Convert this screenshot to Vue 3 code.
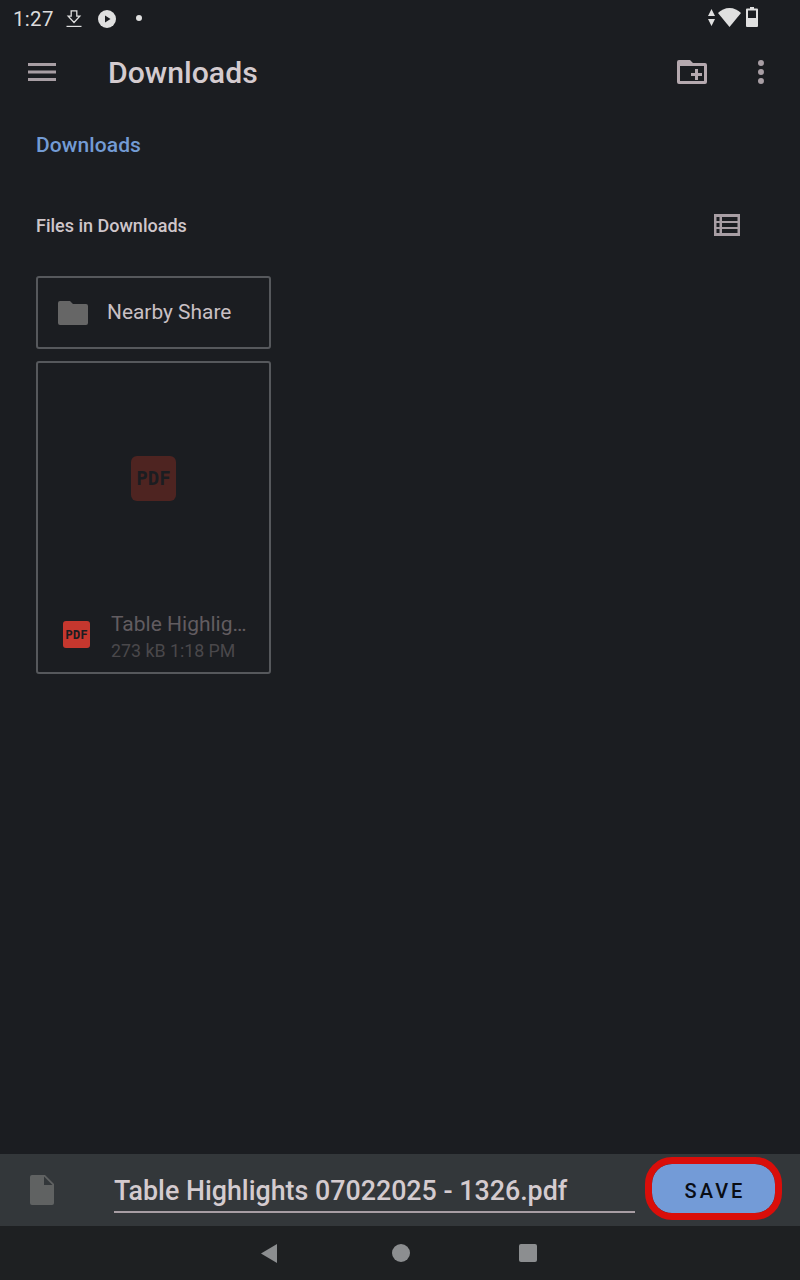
<script setup>
const statusTime = "1:27";
const fileName = "Table Highlights 07022025 - 1326.pdf";
</script>

<template>
  <div class="screen">
    <div class="status-bar">
      <div class="status-left">
        <span class="time">{{ statusTime }}</span>
        <svg class="dl-icon" width="16" height="18" viewBox="0 0 16 18">
          <path d="M5.200 .8h5.600v5.400h3L8 12.500 2.200 6.200h3z" fill="none" stroke="#e0e0e0" stroke-width="1.300" />
          <rect x="0.500" y="15.800" width="15" height="1.200" fill="#e0e0e0" />
        </svg>
        <svg class="play-icon" width="18" height="18" viewBox="0 0 18 18">
          <circle cx="9" cy="9" r="9" fill="#e0e0e0" />
          <path d="M7 5.500v7L12.500 9z" fill="#1b1d21" />
        </svg>
        <span class="dot"></span>
      </div>
      <div class="status-right">
        <svg width="7" height="17" viewBox="0 0 7 17">
          <path d="M3.500 0L7 7H0zM0 10h7l-3.500 7z" fill="#e0e0e0" />
        </svg>
        <svg width="23" height="19" viewBox="0 0 23 19">
          <path d="M11.500 19L0 5C3 2 7 0 11.500 0S20 2 23 5z" fill="#e0e0e0" />
        </svg>
        <svg class="battery" width="12" height="20" viewBox="0 0 12 20">
          <path fill-rule="evenodd" d="M4 0h4v1.500h3a1 1 0 0 1 1 1V19a1 1 0 0 1-1 1H1a1 1 0 0 1-1-1V2.500a1 1 0 0 1 1-1h3zM2 3.500V11h8V3.500z" fill="#e0e0e0" />
        </svg>
      </div>
    </div>

    <header class="app-bar">
      <svg class="menu-icon" width="28" height="18" viewBox="0 0 28 18">
        <path d="M0 0h28v3H0zM0 7.500h28v3H0zM0 15h28v3H0z" fill="#a89ea4" />
      </svg>
      <h1 class="title">Downloads</h1>
      <svg class="new-folder" width="30" height="24" viewBox="0 0 30 24">
        <path fill-rule="evenodd" d="M2 0h11l3 3h12a2 2 0 0 1 2 2v17a2 2 0 0 1-2 2H2a2 2 0 0 1-2-2V2a2 2 0 0 1 2-2zM3 6v15h24V6z" fill="#b5a9af" />
        <path d="M18 9h3v4h4v3h-4v4h-3v-4h-4v-3h4z" fill="#b5a9af" />
      </svg>
      <div class="more">
        <span></span><span></span><span></span>
      </div>
    </header>

    <div class="crumb">Downloads</div>

    <div class="section-head">
      <span class="section-title">Files in Downloads</span>
      <svg width="26" height="22" viewBox="0 0 26 22">
        <path fill-rule="evenodd" d="M0 0h26v22H0zM2.500 3v4h3V3zM8 3v4h15.500V3zM2.500 9v4h3V9zM8 9v4h15.500V9zM2.500 15v4h3v-4zM8 15v4h15.500v-4z" fill="#a89ea4" />
      </svg>
    </div>

    <div class="cards">
      <div class="card folder-card">
        <svg width="30" height="24" viewBox="0 0 30 24">
          <path d="M2 0h10l3 3h13a2 2 0 0 1 2 2v17a2 2 0 0 1-2 2H2a2 2 0 0 1-2-2V2a2 2 0 0 1 2-2z" fill="#666666" />
        </svg>
        <span class="folder-name">Nearby Share</span>
      </div>
      <div class="card file-card">
        <div class="thumb">
          <div class="pdf pdf-big">PDF</div>
        </div>
        <div class="file-info">
          <div class="pdf pdf-small">PDF</div>
          <div class="file-text">
            <div class="file-name">Table Highlig…</div>
            <div class="file-meta">273 kB 1:18 PM</div>
          </div>
        </div>
      </div>
    </div>

    <div class="spacer"></div>

    <div class="save-bar">
      <svg class="doc-icon" width="24" height="30" viewBox="0 0 24 30">
        <path d="M2 0h13l9 9v19a2 2 0 0 1-2 2H2a2 2 0 0 1-2-2V2a2 2 0 0 1 2-2z" fill="#606262" />
        <path d="M14 1.500L22.500 10H14z" fill="#33373a" />
      </svg>
      <div class="name-field">{{ fileName }}</div>
      <div class="save-btn">SAVE</div>
    </div>

    <nav class="nav-bar">
      <svg width="16" height="19" viewBox="0 0 16 19">
        <path d="M16 0v19L0 9.500z" fill="#8c8e90" />
      </svg>
      <span class="nav-circle"></span>
      <span class="nav-square"></span>
    </nav>
  </div>
</template>

<style scoped>
.screen {
  width: 800px;
  height: 1280px;
  background: #1b1d21;
  display: flex;
  flex-direction: column;
  font-family: Roboto, "Liberation Sans", sans-serif;
  overflow: hidden;
}
.status-bar {
  height: 36px;
  display: flex;
  justify-content: space-between;
  align-items: center;
  padding: 0 42px 0 13px;
}
.status-left {
  display: flex;
  align-items: center;
}
.time {
  font-size: 20.500px;
  color: #dcdcdc;
  letter-spacing: 0.3px;
  margin-top: 2px;
}
.dl-icon {
  margin-left: 12px;
  margin-top: 2px;
}
.play-icon {
  margin-left: 16px;
  margin-top: 1px;
}
.dot {
  width: 6px;
  height: 6px;
  border-radius: 50%;
  background: #e0e0e0;
  margin-left: 20px;
}
.status-right {
  display: flex;
  align-items: center;
  gap: 3px;
  margin-top: -2px;
}
.battery {
  margin-left: 2px;
}
.app-bar {
  height: 72px;
  display: flex;
  align-items: center;
  padding-left: 28px;
}
.title {
  margin: 0 0 0 52px;
  font-size: 30.200px;
  font-weight: 500;
  color: #d4cbcf;
  flex: 1;
}
.more {
  width: 6px;
  margin: 0 36px 0 51px;
  display: flex;
  flex-direction: column;
  gap: 3px;
}
.more span {
  width: 6px;
  height: 6px;
  border-radius: 50%;
  background: #a89ea4;
}
.crumb {
  margin-top: 24px;
  padding-left: 36px;
  font-size: 21px;
  font-weight: 500;
  letter-spacing: 0.1px;
  color: #739bd4;
  line-height: 26px;
}
.section-head {
  margin-top: 55px;
  padding: 0 60px 0 36px;
  height: 24px;
  display: flex;
  justify-content: space-between;
  align-items: center;
}
.section-title {
  font-size: 18px;
  font-weight: 500;
  color: #cfc6ca;
}
.cards {
  margin: 39px 0 0 36px;
  width: 235px;
  display: flex;
  flex-direction: column;
  gap: 12px;
}
.card {
  box-sizing: border-box;
  border: 2px solid #56585c;
  border-radius: 3px;
}
.folder-card {
  height: 73px;
  display: flex;
  align-items: center;
  padding-left: 20px;
}
.folder-name {
  margin: -1px 0 0 19px;
  font-size: 20.900px;
  color: #c9c0c4;
}
.file-card {
  height: 313px;
  display: flex;
  flex-direction: column;
}
.thumb {
  height: 230px;
  display: flex;
  align-items: center;
  justify-content: center;
}
.pdf {
  display: flex;
  align-items: center;
  justify-content: center;
  font-family: "DejaVu Sans Mono", monospace;
  font-weight: 700;
  color: #1b1d21;
}
.pdf-big {
  width: 45px;
  height: 45px;
  border-radius: 6px;
  background: #4e2421;
  font-size: 19px;
}
.pdf-small {
  width: 27px;
  height: 27px;
  border-radius: 3px;
  background: #c5372e;
  font-size: 12.500px;
  flex: none;
  margin-top: 10px;
}
.file-info {
  display: flex;
  align-items: flex-start;
  padding: 18px 0 0 25px;
}
.file-text {
  margin-left: 21px;
}
.file-name {
  font-size: 21px;
  line-height: 26px;
  color: #625c60;
  white-space: nowrap;
}
.file-meta {
  margin-top: 2px;
  font-size: 17.800px;
  line-height: 24px;
  color: #4a484b;
  white-space: nowrap;
}
.spacer {
  flex: 1;
}
.save-bar {
  height: 72px;
  background: #33373a;
  display: flex;
  align-items: center;
  padding-left: 30px;
}
.doc-icon {
  flex: none;
}
.name-field {
  box-sizing: border-box;
  margin-left: 60px;
  width: 521px;
  height: 46px;
  border-bottom: 2px solid #a89ea4;
  font-size: 26.800px;
  line-height: 48px;
  font-weight: 500;
  color: #d4cbcf;
  white-space: nowrap;
}
.save-btn {
  box-sizing: border-box;
  margin: 0 0 3px 17px;
  width: 123px;
  height: 49px;
  border-radius: 20px;
  background: #739bd7;
  outline: 7px solid #d90e0a;
  display: flex;
  align-items: center;
  justify-content: center;
  padding: 5px 0 0 3px;
  color: #0a0d14;
  font-size: 20px;
  font-weight: 500;
  letter-spacing: 3px;
}
.nav-bar {
  height: 54px;
  background: #1e2022;
  display: flex;
  align-items: center;
  padding-left: 261px;
}
.nav-circle {
  width: 18px;
  height: 18px;
  border-radius: 50%;
  background: #8c8e90;
  margin-left: 115px;
}
.nav-square {
  width: 18px;
  height: 18px;
  border-radius: 2px;
  background: #8c8e90;
  margin-left: 109px;
}
</style>
